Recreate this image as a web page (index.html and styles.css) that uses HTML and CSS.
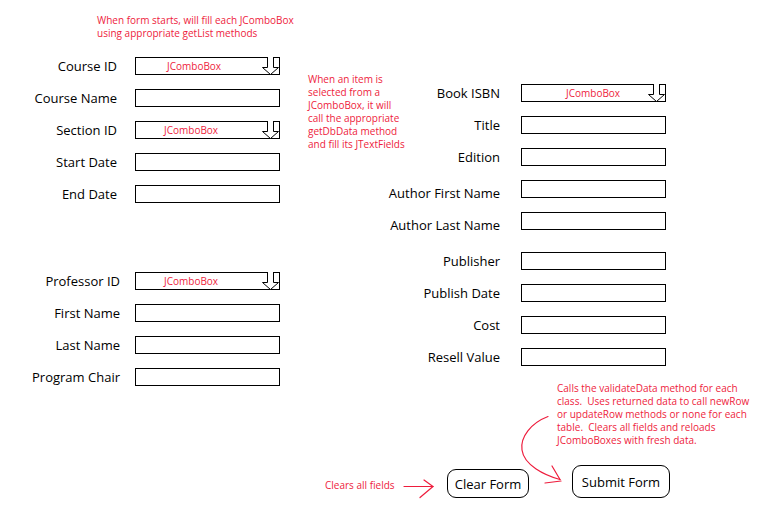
FILE: index.html
```html
<!DOCTYPE html>
<html>
<head>
<meta charset="utf-8">
<title>Form mockup</title>
<link rel="stylesheet" href="styles.css">
</head>
<body>
<div class="page">
  <div class="columns">
    <div class="col-left">
      <p class="note note-top">When form starts, will fill each JComboBox<br>using appropriate getList methods</p>
      <div class="group group-course">
        <div class="row"><span class="label">Course ID</span><div class="combo combo-course"><span class="combo-text">JComboBox</span><svg class="combo-arrow" width="18" height="18" viewBox="0 0 18 18"><path d="M5.5 0 V10.5 H0.5 L8.5 17.5 L16.5 10.5 H11.5 V0" fill="#fff" stroke="#000" stroke-width="1"/></svg></div></div>
        <div class="row"><span class="label">Course Name</span><div class="field"></div></div>
        <div class="row"><span class="label">Section ID</span><div class="combo"><span class="combo-text">JComboBox</span><svg class="combo-arrow" width="18" height="18" viewBox="0 0 18 18"><path d="M5.5 0 V10.5 H0.5 L8.5 17.5 L16.5 10.5 H11.5 V0" fill="#fff" stroke="#000" stroke-width="1"/></svg></div></div>
        <div class="row"><span class="label">Start Date</span><div class="field"></div></div>
        <div class="row"><span class="label">End Date</span><div class="field"></div></div>
      </div>
      <div class="group group-prof">
        <div class="row"><span class="label">Professor ID</span><div class="combo"><span class="combo-text">JComboBox</span><svg class="combo-arrow" width="18" height="18" viewBox="0 0 18 18"><path d="M5.5 0 V10.5 H0.5 L8.5 17.5 L16.5 10.5 H11.5 V0" fill="#fff" stroke="#000" stroke-width="1"/></svg></div></div>
        <div class="row"><span class="label">First Name</span><div class="field"></div></div>
        <div class="row"><span class="label">Last Name</span><div class="field"></div></div>
        <div class="row"><span class="label">Program Chair</span><div class="field"></div></div>
      </div>
    </div>
    <div class="col-mid">
      <p class="note note-mid">When an item is<br>selected from a<br>JComboBox, it will<br>call the appropriate<br>getDbData method<br>and fill its JTextFields</p>
    </div>
    <div class="col-right">
      <div class="group group-book">
        <div class="row"><span class="label">Book ISBN</span><div class="combo combo-wide"><span class="combo-text">JComboBox</span><svg class="combo-arrow" width="18" height="18" viewBox="0 0 18 18"><path d="M5.5 0 V10.5 H0.5 L8.5 17.5 L16.5 10.5 H11.5 V0" fill="#fff" stroke="#000" stroke-width="1"/></svg></div></div>
        <div class="row"><span class="label">Title</span><div class="field"></div></div>
        <div class="row"><span class="label">Edition</span><div class="field"></div></div>
        <div class="row"><span class="label label-low">Author First Name</span><div class="field"></div></div>
        <div class="row"><span class="label label-low">Author Last Name</span><div class="field"></div></div>
        <div class="row row-spaced"><span class="label">Publisher</span><div class="field"></div></div>
        <div class="row"><span class="label">Publish Date</span><div class="field"></div></div>
        <div class="row"><span class="label">Cost</span><div class="field"></div></div>
        <div class="row"><span class="label">Resell Value</span><div class="field"></div></div>
      </div>
      <p class="note note-submit">Calls the validateData method for each<br>class.&nbsp; Uses returned data to call newRow<br>or updateRow methods or none for each<br>table.&nbsp; Clears all fields and reloads<br>JComboBoxes with fresh data.</p>
    </div>
  </div>
  <div class="footer">
    <span class="note hint">Clears all fields</span>
    <div class="btn btn-clear">Clear Form</div>
    <div class="btn btn-submit">Submit Form</div>
  </div>
  <svg class="arrows" width="773" height="529" viewBox="0 0 773 529">
    <g fill="none" stroke="#ee1c3c" stroke-width="1.2" stroke-linecap="round">
      <path d="M404 486.5 H433"/>
      <path d="M424 480 L433 486.5 L420 497.5"/>
      <path d="M548 416.5 C531 423, 520 437, 522 450 C524 465, 544 475, 560 479.5"/>
      <path d="M552 466 L560 479.5"/>
      <path d="M545 483 L561 481"/>
    </g>
  </svg>
</div>
</body>
</html>
```

FILE: styles.css
```css
html, body {
  margin: 0;
  padding: 0;
  background: #ffffff;
}

.page {
  position: relative;
  width: 773px;
  height: 529px;
  overflow: hidden;
  background: #ffffff;
  font-family: "Open Sans", "Liberation Sans", sans-serif;
  color: #000000;
}

.note {
  margin: 0;
  font-family: "Open Sans", "Liberation Sans", sans-serif;
  font-size: 10px;
  line-height: 13px;
  color: #ee1c3c;
  white-space: nowrap;
}

.columns {
  display: flex;
  align-items: flex-start;
}

.col-left {
  width: 300px;
  flex: none;
}

.col-mid {
  width: 80px;
  flex: none;
}

.col-right {
  width: 393px;
  flex: none;
  padding-top: 84px;
}

.note-top {
  margin-left: 97px;
  padding-top: 14px;
}

.note-mid {
  margin-left: 8px;
  margin-top: 73px;
}

.note-submit {
  margin-left: 177px;
  margin-top: 16px;
}

.group {
  display: flex;
  flex-direction: column;
  gap: 14px;
}

.group-course {
  margin-top: 17px;
}

.group-prof {
  margin-top: 69px;
}

.row {
  display: grid;
  grid-template-columns: 117px 145px;
  column-gap: 18px;
  align-items: center;
  height: 18px;
}

.group-prof .row {
  grid-template-columns: 120px 145px;
  column-gap: 15px;
}

.col-right .row {
  grid-template-columns: 120px 145px;
  column-gap: 21px;
}

.row-spaced {
  margin-top: 8px;
}

.label {
  font-size: 13px;
  line-height: 18px;
  text-align: right;
  white-space: nowrap;
}

.label-low {
  position: relative;
  top: 4px;
}

.field {
  box-sizing: border-box;
  height: 18px;
  border: 1px solid #000000;
  background: #ffffff;
}

.combo {
  box-sizing: border-box;
  height: 18px;
  border: 1px solid #000000;
  background: #ffffff;
  display: flex;
  align-items: center;
  padding-left: 28px;
}

.combo-course {
  padding-left: 31px;
}

.combo-wide {
  padding-left: 44px;
}

.combo-text {
  font-size: 10px;
  line-height: 13px;
  color: #ee1c3c;
}

.combo-arrow {
  flex: none;
  align-self: flex-start;
  margin: -1px -1px 0 auto;
  overflow: visible;
}

.footer {
  display: flex;
  align-items: flex-end;
  height: 33px;
  margin-top: 18px;
  padding-left: 325px;
}

.hint {
  margin-bottom: 6px;
  width: 122px;
}

.btn {
  box-sizing: border-box;
  border: 1px solid #000000;
  border-radius: 9px;
  background: #ffffff;
  font-size: 13px;
  display: flex;
  align-items: center;
  justify-content: center;
}

.btn-clear {
  width: 82px;
  height: 29px;
}

.btn-submit {
  width: 98px;
  height: 33px;
  margin-left: 43px;
}

.arrows {
  position: absolute;
  left: 0;
  top: 0;
  pointer-events: none;
}
```
